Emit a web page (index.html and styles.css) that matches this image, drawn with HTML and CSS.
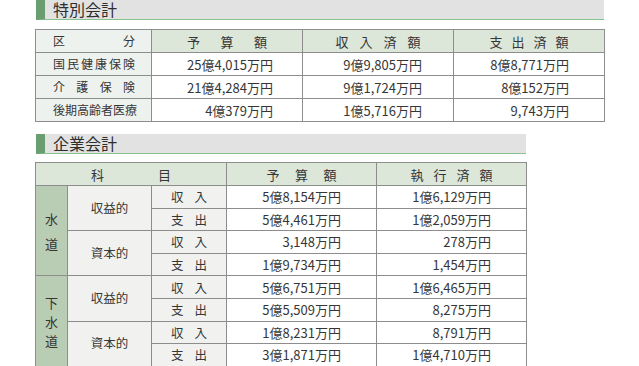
FILE: index.html
```html
<!DOCTYPE html>
<html lang="ja">

<head>
    <meta charset="UTF-8">
    <meta name="viewport" content="width=device-width, initial-scale=1.0">
    <title>特別会計・企業会計</title>
    <link rel="stylesheet" href="styles.css">
</head>

<body>
    <!-- 特別会計 -->
    <div class="section section-special">
        <h2 class="heading">特別会計</h2>
        <table class="tbl tbl-special">
            <colgroup>
                <col class="c-label">
                <col class="c-val">
                <col class="c-val">
                <col class="c-val">
            </colgroup>
            <thead>
                <tr>
                    <th class="label"><span class="just">区分</span></th>
                    <th><span class="spread w80">予算額</span></th>
                    <th><span class="spread w85">収入済額</span></th>
                    <th><span class="spread w79">支出済額</span></th>
                </tr>
            </thead>
            <tbody>
                <tr>
                    <td class="label"><span class="just">国民健康保険</span></td>
                    <td class="num">25億4,015万円</td>
                    <td class="num">9億9,805万円</td>
                    <td class="num">8億8,771万円</td>
                </tr>
                <tr>
                    <td class="label"><span class="just">介護保険</span></td>
                    <td class="num">21億4,284万円</td>
                    <td class="num">9億1,724万円</td>
                    <td class="num">8億152万円</td>
                </tr>
                <tr>
                    <td class="label"><span class="just">後期高齢者医療</span></td>
                    <td class="num">4億379万円</td>
                    <td class="num">1億5,716万円</td>
                    <td class="num">9,743万円</td>
                </tr>
            </tbody>
        </table>
    </div>

    <!-- 企業会計 -->
    <div class="section section-corp">
        <h2 class="heading">企業会計</h2>
        <table class="tbl tbl-corp">
            <colgroup>
                <col class="c-kind">
                <col class="c-type">
                <col class="c-io">
                <col class="c-val">
                <col class="c-val">
            </colgroup>
            <thead>
                <tr>
                    <th colspan="3"><span class="spread w80">科目</span></th>
                    <th><span class="spread w70">予算額</span></th>
                    <th><span class="spread w82">執行済額</span></th>
                </tr>
            </thead>
            <tbody>
                <tr>
                    <td class="kind kind-water" rowspan="4">水<br>道</td>
                    <td class="type" rowspan="2">収益的</td>
                    <td class="io"><span class="spread w36">収入</span></td>
                    <td class="num">5億8,154万円</td>
                    <td class="num">1億6,129万円</td>
                </tr>
                <tr>
                    <td class="io"><span class="spread w36">支出</span></td>
                    <td class="num">5億4,461万円</td>
                    <td class="num">1億2,059万円</td>
                </tr>
                <tr>
                    <td class="type" rowspan="2">資本的</td>
                    <td class="io"><span class="spread w36">収入</span></td>
                    <td class="num">3,148万円</td>
                    <td class="num">278万円</td>
                </tr>
                <tr>
                    <td class="io"><span class="spread w36">支出</span></td>
                    <td class="num">1億9,734万円</td>
                    <td class="num">1,454万円</td>
                </tr>
                <tr>
                    <td class="kind kind-sewer" rowspan="4">下<br>水<br>道</td>
                    <td class="type" rowspan="2">収益的</td>
                    <td class="io"><span class="spread w36">収入</span></td>
                    <td class="num">5億6,751万円</td>
                    <td class="num">1億6,465万円</td>
                </tr>
                <tr>
                    <td class="io"><span class="spread w36">支出</span></td>
                    <td class="num">5億5,509万円</td>
                    <td class="num">8,275万円</td>
                </tr>
                <tr>
                    <td class="type" rowspan="2">資本的</td>
                    <td class="io"><span class="spread w36">収入</span></td>
                    <td class="num">1億8,231万円</td>
                    <td class="num">8,791万円</td>
                </tr>
                <tr>
                    <td class="io"><span class="spread w36">支出</span></td>
                    <td class="num">3億1,871万円</td>
                    <td class="num">1億4,710万円</td>
                </tr>
            </tbody>
        </table>
    </div>
</body>

</html>
```

FILE: styles.css
```css
* {
    margin: 0;
    padding: 0;
    box-sizing: border-box;
}

body {
    background-color: #fff;
    color: #363636;
    font-family: "Noto Sans CJK JP", "Noto Sans", sans-serif;
    padding-left: 35px;
}

/* 見出し（緑のブロック＋灰色の帯＋緑の下線） */
.heading {
    height: 20px;
    background-color: #e1e2e1;
    border-bottom: 1px solid #86c28e;
    border-left: 9px solid #6a9d6f;
    margin-left: 1px;
    padding-left: 8px;
    font-size: 16px;
    font-weight: normal;
    line-height: 19px;
    color: #2e2e2e;
}

.section-special .heading {
    width: 568px;
}

.section-corp {
    margin-top: 12px;
}

.section-corp .heading {
    width: 490px;
}

/* 表の共通部分 */
.tbl {
    border-collapse: collapse;
    table-layout: fixed;
    font-size: 13px;
}

.tbl th,
.tbl td {
    border: 1px solid #8d8d8d;
    height: 23px;
    padding: 0;
    white-space: nowrap;
    line-height: 1;
}

.tbl th {
    background-color: #dce7da;
    font-weight: normal;
    text-align: center;
}

.tbl .num {
    text-align: right;
    background-color: #fff;
}

/* 均等割付 */
.just {
    display: block;
    text-align: justify;
    text-align-last: justify;
}

.spread {
    display: inline-block;
    text-align: justify;
    text-align-last: justify;
    vertical-align: middle;
}

.w36 { width: 36px; }
.w70 { width: 70px; }
.w79 { width: 79px; }
.w80 { width: 80px; }
.w82 { width: 82px; }
.w85 { width: 85px; }

/* 特別会計 */
.tbl-special {
    width: 569px;
    margin-top: 9px;
}

.tbl-special .c-label {
    width: 116px;
}

.tbl-special .c-val {
    width: 151px;
}

.tbl-special .label {
    background-color: #eef2ee;
    padding: 0 16px 0 17px;
    font-size: 12px;
}

.tbl-special td:nth-child(2) {
    padding-right: 29px;
}

.tbl-special td:nth-child(3) {
    padding-right: 31px;
}

.tbl-special td:nth-child(4) {
    padding-right: 35px;
}

/* 企業会計 */
.tbl-corp {
    width: 492px;
    margin-top: 8px;
}

.tbl-corp .c-kind {
    width: 32px;
}

.tbl-corp .c-type {
    width: 84px;
}

.tbl-corp .c-io {
    width: 75px;
}

.tbl-corp .c-val {
    width: 150px;
}

.tbl-corp tbody td {
    height: 22.6px;
}

.tbl-corp .kind {
    background-color: #b9cdb4;
    text-align: center;
    font-size: 13px;
}

.tbl-corp .kind-water {
    line-height: 25px;
}

.tbl-corp .kind-sewer {
    line-height: 19px;
}

.tbl-corp .type,
.tbl-corp .io {
    background-color: #f1f2f0;
    text-align: center;
    font-size: 12.5px;
}

.tbl-corp .num {
    padding-right: 35px;
}
```
